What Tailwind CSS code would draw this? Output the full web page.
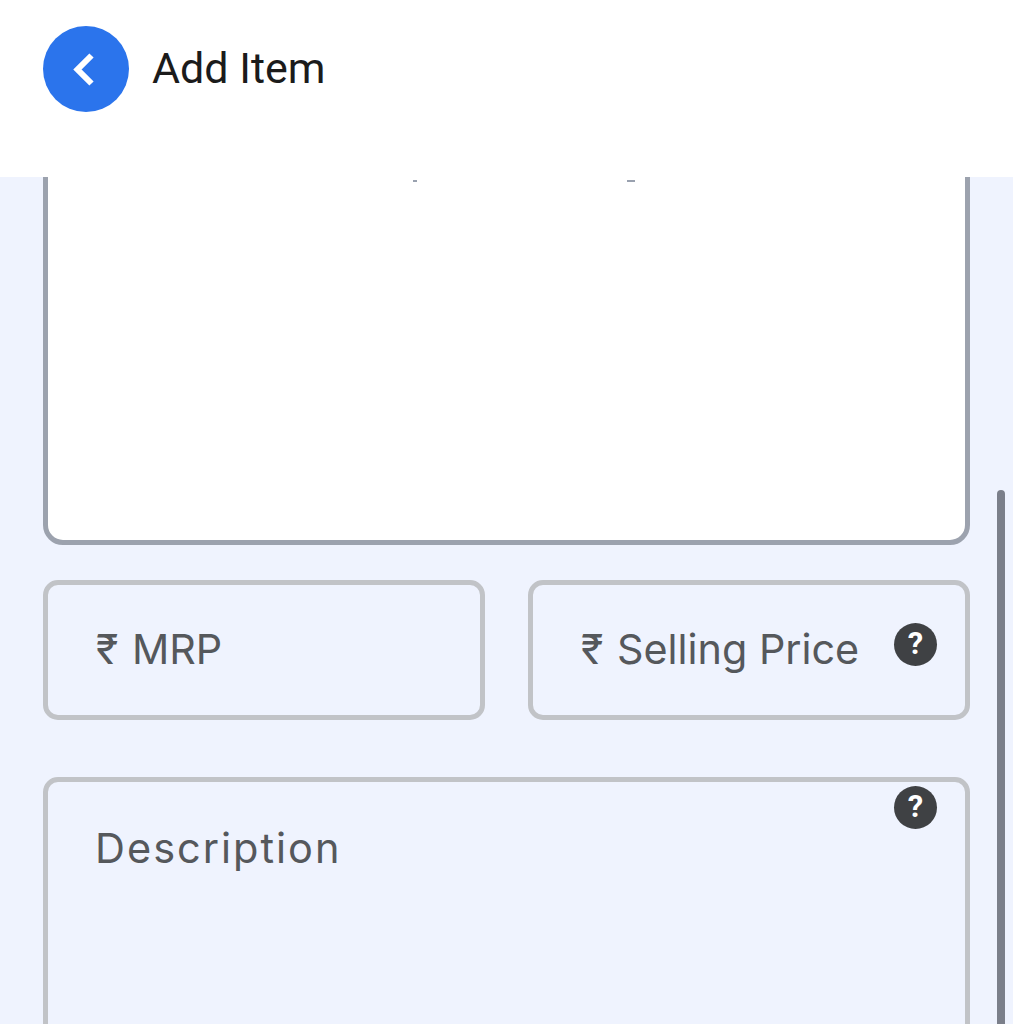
<!DOCTYPE html>
<html lang="en">
<head>
<meta charset="UTF-8">
<title>Add Item</title>
<script src="https://cdn.jsdelivr.net/npm/@tailwindcss/browser@4"></script>
</head>
<body class="relative h-[1024px] w-[1013px] overflow-hidden bg-[#eff3fe] font-['Inter',sans-serif]">
    <header class="flex h-[177px] items-start gap-[23px] bg-white pl-[43px] pt-[26px]">
        <button class="flex size-[86px] items-center justify-center rounded-full bg-[#2b74ec]">
            <svg class="size-[40px]" viewBox="0 0 40 40" fill="none" stroke="#fff" stroke-width="6">
                <path d="M25.5 6.5 L11.5 20.5 L25.5 34.5"/>
            </svg>
        </button>
        <h1 class="mt-[15px] font-['Roboto',sans-serif] text-[43px] leading-[54px] text-[#1b1b1b]">Add Item</h1>
    </header>

    <main class="h-[847px] overflow-hidden px-[43px]">
        <div class="relative -mt-[40px] h-[408px] rounded-[20px] border-[5px] border-[#9ca2ae] bg-white">
            <div class="absolute left-[365px] top-[38px] h-[2px] w-[4px] bg-gray-400"></div>
            <div class="absolute left-[579px] top-[38px] h-[2px] w-[8px] bg-gray-400"></div>
        </div>

        <div class="mt-[35px] grid grid-cols-2 gap-[43px]">
            <div class="flex h-[140px] items-center rounded-[15px] border-[5px] border-[#c1c3c7] pl-[48px] text-[41.3px] text-[#55585c]">
                <span><span class="mr-[2px]">₹</span> MRP</span>
            </div>
            <div class="relative flex h-[140px] items-center rounded-[15px] border-[5px] border-[#c1c3c7] pl-[48px] text-[41.3px] text-[#55585c]">
                <span><span class="mr-[2px]">₹</span> Selling Price</span>
                <span class="absolute right-[28px] top-[38px] flex size-[43px] items-center justify-center rounded-full bg-[#3f4144] font-['Roboto',sans-serif] text-[31px] font-bold text-white">?</span>
            </div>
        </div>

        <div class="relative mt-[57px] h-[300px] rounded-[15px] border-[5px] border-[#c1c3c7] pl-[47px] pt-[39px]">
            <span class="text-[41.5px] leading-[54px] tracking-[2px] text-[#55585c]">Description</span>
            <span class="absolute right-[28px] top-[4px] flex size-[43px] items-center justify-center rounded-full bg-[#3f4144] font-['Roboto',sans-serif] text-[31px] font-bold text-white">?</span>
        </div>
    </main>

    <div class="absolute left-[997px] top-[490px] h-[560px] w-[8px] rounded-full bg-[#7b7f8a]"></div>
</body>
</html>
